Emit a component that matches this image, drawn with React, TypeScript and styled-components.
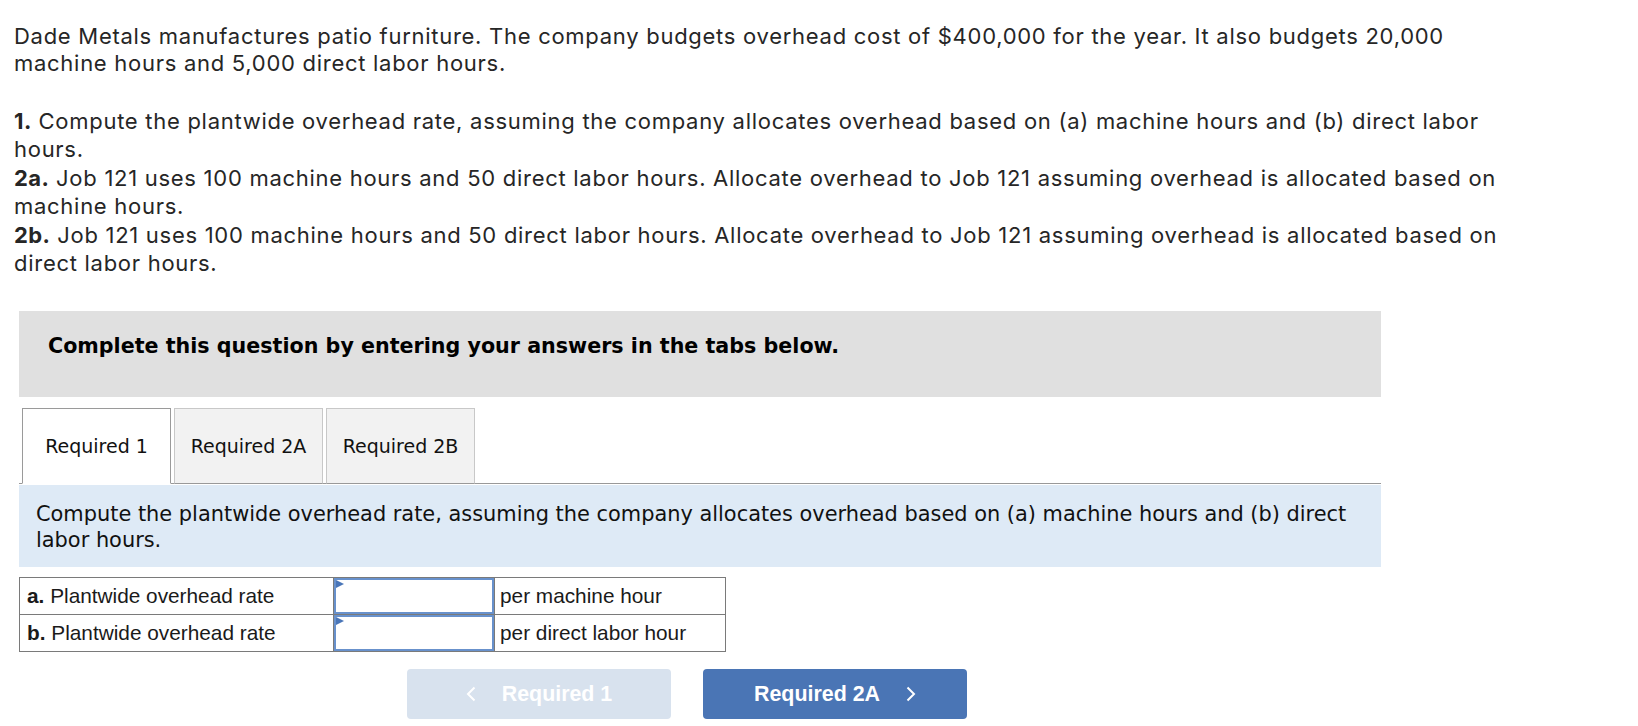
import React from 'react';
import styled, { createGlobalStyle } from 'styled-components';

const GlobalStyle = createGlobalStyle`
  html, body {
    margin: 0;
    padding: 0;
    background: #fff;
  }
  body {
    font-family: 'Inter', 'Liberation Sans', sans-serif;
  }
`;

const Page = styled.div`
  padding: 23px 0 0 14px;
  width: 1512px;
`;

const Prompt = styled.div<{ $lh: number }>`
  font-family: 'Inter', sans-serif;
  font-size: 22px;
  line-height: ${(p) => p.$lh}px;
  color: #262626;
  letter-spacing: 0.72px;

  & + & {
    margin-top: 30px;
  }

  b {
    font-weight: 700;
    letter-spacing: 0.4px;
  }
`;

const Question = styled.div`
  margin-left: 5px;
  width: 1362px;
`;

const Banner = styled.div`
  margin-top: 34px;
  height: 86px;
  box-sizing: border-box;
  padding: 22px 0 0 29px;
  background: #e0e0e0;
  font-family: 'DejaVu Sans', Verdana, sans-serif;
  font-weight: 700;
  font-size: 20.65px;
  line-height: 26px;
  color: #000;
`;

const TabRow = styled.div`
  display: flex;
  gap: 3px;
  margin-top: 11px;
  padding-left: 3px;
  border-bottom: 1px solid #999;
`;

const Tab = styled.button<{ $active?: boolean }>`
  width: 149px;
  height: 76px;
  margin-bottom: -1px;
  box-sizing: border-box;
  border: 1px solid ${(p) => (p.$active ? '#9a9a9a' : '#c8c8c8')};
  border-bottom-color: ${(p) => (p.$active ? '#fff' : '#999')};
  background: ${(p) => (p.$active ? '#fff' : '#f2f2f2')};
  font-family: 'DejaVu Sans', Verdana, sans-serif;
  font-size: 19px;
  color: #111;
  padding: 0;
  cursor: pointer;
`;

const Instructions = styled.div`
  margin-top: 1px;
  padding: 16px 17px 14px;
  background: #deeaf6;
  font-family: 'DejaVu Sans', Verdana, sans-serif;
  font-size: 20.9px;
  line-height: 26px;
  color: #111;
`;

const AnswerTable = styled.table`
  margin-top: 10px;
  border-collapse: collapse;
  font-family: 'Liberation Sans', Arial, sans-serif;
  font-size: 20.8px;
  color: #1a1a1a;
`;

const Cell = styled.td<{ $w: number; $pad: number }>`
  width: ${(p) => p.$w}px;
  height: 37px;
  box-sizing: border-box;
  border: 1px solid #7a7a7a;
  padding: 0 ${(p) => p.$pad}px;
  vertical-align: middle;
  white-space: nowrap;

  b {
    font-weight: 700;
  }
`;

const InputCell = styled.td`
  width: 161px;
  height: 37px;
  box-sizing: border-box;
  border: 1px solid #7a7a7a;
  padding: 0;
  position: relative;

  &::before {
    content: '';
    position: absolute;
    top: 2px;
    left: 2px;
    border-style: solid;
    border-width: 4.5px 0 4.5px 8px;
    border-color: transparent transparent transparent #4a76b8;
  }
`;

const AmountInput = styled.input`
  display: block;
  width: 100%;
  height: 36px;
  box-sizing: border-box;
  border: 2px solid #6891cc;
  margin: 0;
  padding: 0 6px;
  font-family: 'Liberation Sans', Arial, sans-serif;
  font-size: 18px;
  outline: none;
  background: #fff;
`;

const NavRow = styled.div`
  display: flex;
  gap: 32px;
  margin-top: 17px;
  padding-left: 388px;
`;

const NavButton = styled.button<{ $disabled?: boolean }>`
  width: 264px;
  height: 50px;
  border: none;
  border-radius: 4px;
  background: ${(p) => (p.$disabled ? '#d8e2ee' : '#4a75b5')};
  color: #fff;
  font-family: 'Liberation Sans', Arial, sans-serif;
  font-weight: 700;
  font-size: 21.4px;
  display: flex;
  align-items: center;
  justify-content: center;
  gap: 26px;
  padding: 0;
  cursor: ${(p) => (p.$disabled ? 'default' : 'pointer')};
`;

function Chevron({ dir }: { dir: 'left' | 'right' }) {
  return (
    <svg width="10" height="16" viewBox="0 0 10 16">
      <path
        d={dir === 'left' ? 'M8.5 1.5 L2 8 L8.5 14.5' : 'M1.5 1.5 L8 8 L1.5 14.5'}
        fill="none"
        stroke="#fff"
        strokeWidth="2"
      />
    </svg>
  );
}

const rows = [
  { key: 'a', label: 'Plantwide overhead rate', unit: 'per machine hour' },
  { key: 'b', label: 'Plantwide overhead rate', unit: 'per direct labor hour' },
];

export default function App() {
  return (
    <>
      <GlobalStyle />
      <Page>
        <Prompt $lh={27}>
          Dade Metals manufactures patio furniture. The company budgets overhead cost of $400,000 for the
          year. It also budgets 20,000 machine hours and 5,000 direct labor hours.
        </Prompt>
        <Prompt $lh={28.4}>
          <div>
            <b>1.</b> Compute the plantwide overhead rate, assuming the company allocates overhead based on (a)
            machine hours and (b) direct labor hours.
          </div>
          <div>
            <b>2a.</b> Job 121 uses 100 machine hours and 50 direct labor hours. Allocate overhead to Job 121
            assuming overhead is allocated based on machine hours.
          </div>
          <div>
            <b>2b.</b> Job 121 uses 100 machine hours and 50 direct labor hours. Allocate overhead to Job 121
            assuming overhead is allocated based on direct labor hours.
          </div>
        </Prompt>

        <Question>
          <Banner>Complete this question by entering your answers in the tabs below.</Banner>

          <TabRow>
            <Tab $active>Required 1</Tab>
            <Tab>Required 2A</Tab>
            <Tab>Required 2B</Tab>
          </TabRow>

          <Instructions>
            Compute the plantwide overhead rate, assuming the company allocates overhead based on (a) machine
            hours and (b) direct labor hours.
          </Instructions>

          <AnswerTable>
            <tbody>
              {rows.map((r) => (
                <tr key={r.key}>
                  <Cell $w={314} $pad={7}>
                    <b>{r.key}.</b> {r.label}
                  </Cell>
                  <InputCell>
                    <AmountInput type="text" />
                  </InputCell>
                  <Cell $w={231} $pad={5}>
                    {r.unit}
                  </Cell>
                </tr>
              ))}
            </tbody>
          </AnswerTable>

          <NavRow>
            <NavButton $disabled>
              <Chevron dir="left" />
              Required 1
            </NavButton>
            <NavButton>
              Required 2A
              <Chevron dir="right" />
            </NavButton>
          </NavRow>
        </Question>
      </Page>
    </>
  );
}
